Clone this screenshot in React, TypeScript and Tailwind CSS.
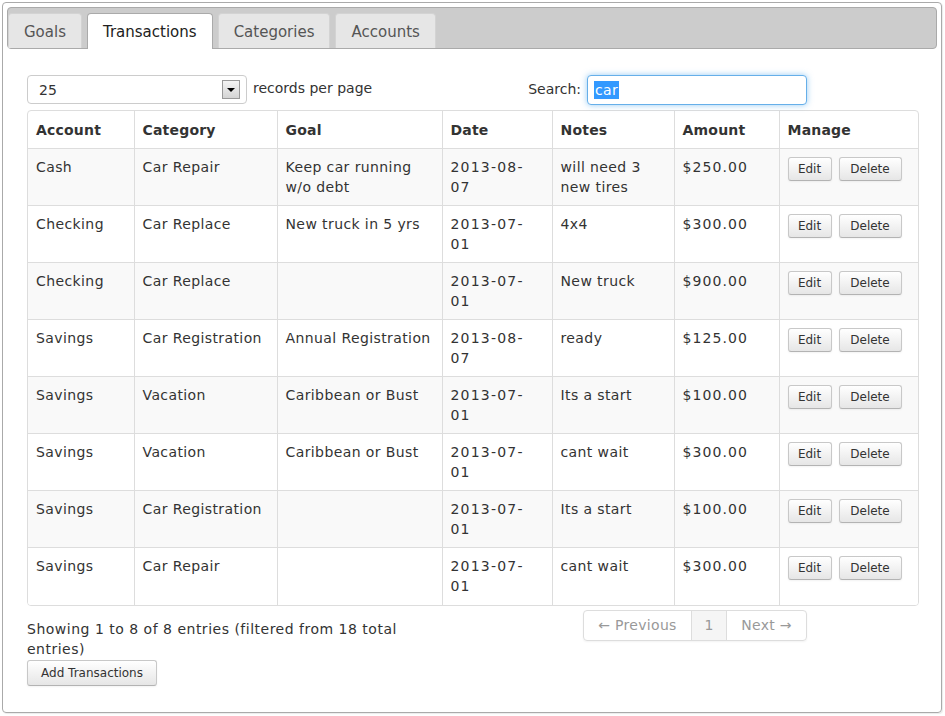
import React from "react";

const rows = [
  ["Cash", "Car Repair", "Keep car running w/o debt", "2013-08-07", "will need 3 new tires", "$250.00"],
  ["Checking", "Car Replace", "New truck in 5 yrs", "2013-07-01", "4x4", "$300.00"],
  ["Checking", "Car Replace", "", "2013-07-01", "New truck", "$900.00"],
  ["Savings", "Car Registration", "Annual Registration", "2013-08-07", "ready", "$125.00"],
  ["Savings", "Vacation", "Caribbean or Bust", "2013-07-01", "Its a start", "$100.00"],
  ["Savings", "Vacation", "Caribbean or Bust", "2013-07-01", "cant wait", "$300.00"],
  ["Savings", "Car Registration", "", "2013-07-01", "Its a start", "$100.00"],
  ["Savings", "Car Repair", "", "2013-07-01", "cant wait", "$300.00"],
];

const widths = [107, 143, 165, 110, 122, 105, 140];
const headers = ["Account", "Category", "Goal", "Date", "Notes", "Amount", "Manage"];

function Btn({ children, className = "" }: { children: React.ReactNode; className?: string }) {
  return (
    <span
      className={
        "inline-flex items-center justify-center h-[24px] rounded-[3px] border border-[#c8c8c8] border-b-[#b3b3b3] bg-gradient-to-b from-white to-[#e6e6e6] text-[12px] text-[#333] shadow-[inset_0_1px_0_rgba(255,255,255,0.2),0_1px_2px_rgba(0,0,0,0.05)] " +
        className
      }
    >
      {children}
    </span>
  );
}

export default function App() {
  return (
    <div className="w-[945px] h-[716px] bg-white pt-[2px] pl-[2px] font-['DejaVu_Sans',Verdana,sans-serif] text-[14px] leading-[20px] text-[#333]">
      <div className="w-[940px] h-[711px] border border-[#aaa] rounded-[4px] p-[4px] shadow-[1px_1px_1px_rgba(0,0,0,0.08)]">
        {/* tab bar */}
        <div className="h-[42px] border border-[#aaa] bg-[#cccccc] rounded-[4px] flex items-end gap-[5px] pl-0">
          <div className="h-[35px] px-[15px] pt-[2px] flex items-center border border-b-0 border-[#d3d3d3] bg-[#e6e6e6] rounded-t-[4px] text-[#555] text-[15px]">
            Goals
          </div>
          <div className="h-[36px] -mb-px px-[15px] pt-px flex items-center border border-b-0 border-[#aaa] bg-white rounded-t-[4px] text-[#212121] text-[15px]">
            Transactions
          </div>
          <div className="h-[35px] px-[15px] pt-[2px] flex items-center border border-b-0 border-[#d3d3d3] bg-[#e6e6e6] rounded-t-[4px] text-[#555] text-[15px]">
            Categories
          </div>
          <div className="h-[35px] px-[15px] pt-[2px] flex items-center border border-b-0 border-[#d3d3d3] bg-[#e6e6e6] rounded-t-[4px] text-[#555] text-[15px]">
            Accounts
          </div>
        </div>

        {/* panel */}
        <div className="pl-[20px] pt-[26px]">
          {/* controls */}
          <div className="w-[780px] grid grid-cols-2 gap-[20px]">
            <div className="flex items-start gap-[6px]">
              <div className="w-[220px] h-[29px] border border-[#ccc] rounded-[4px] bg-white flex items-center pl-[11px] pr-[6px] justify-between">
                <span>25</span>
                <span className="w-[18px] h-[19px] border border-[#999] bg-gradient-to-b from-[#f4f4f4] to-[#d4d4d4] flex items-center justify-center">
                  <span className="w-0 h-0 border-l-[4px] border-r-[4px] border-t-[4px] border-l-transparent border-r-transparent border-t-black" />
                </span>
              </div>
              <span className="leading-[26px]">records per page</span>
            </div>
            <div className="flex justify-end items-start gap-[6px]">
              <span className="leading-[28px]">Search:</span>
              <div className="w-[220px] h-[30px] border border-[#66afe9] rounded-[4px] bg-white shadow-[0_0_6px_rgba(82,168,236,0.6)] flex items-center pl-[6px]">
                <span className="bg-[#3399ff] text-white leading-[18px] px-px tracking-[0.4px]">car</span>
              </div>
            </div>
          </div>

          {/* table */}
          <div className="mt-[5px] w-[892px] border border-[#ddd] rounded-[4px] overflow-hidden">
            <table className="w-full table-fixed border-collapse">
              <colgroup>
                {widths.map((w, i) => (
                  <col key={i} style={{ width: i === 0 ? w - 1 : w }} />
                ))}
              </colgroup>
              <thead>
                <tr>
                  {headers.map((h, i) => (
                    <th
                      key={h}
                      className={
                        "text-left font-bold px-[8px] pt-[9px] pb-[8px] align-top tracking-[0.2px] " +
                        (i > 0 ? "border-l border-[#ddd]" : "")
                      }
                    >
                      {h}
                    </th>
                  ))}
                </tr>
              </thead>
              <tbody>
                {rows.map((r, ri) => (
                  <tr key={ri} className={ri % 2 === 0 ? "bg-[#f9f9f9]" : "bg-white"}>
                    {r.map((c, ci) => (
                      <td
                        key={ci}
                        className={
                          "px-[8px] py-[8px] h-[57px] align-top border-t border-[#ddd] " +
                          (ci > 0 ? "border-l " : "") +
                          (ci === 3 ? "tracking-[1.2px]" : ci === 5 ? "tracking-[1.1px]" : "tracking-[0.4px]")
                        }
                      >
                        {ci === 3 ? (
                          <>
                            {c.slice(0, 8)}
                            <br />
                            {c.slice(8)}
                          </>
                        ) : (
                          c
                        )}
                      </td>
                    ))}
                    <td className="px-[8px] py-[8px] align-top border-t border-l border-[#ddd]">
                      <div className="flex gap-[7px]">
                        <Btn className="w-[44px]">Edit</Btn>
                        <Btn className="w-[63px]">Delete</Btn>
                      </div>
                    </td>
                  </tr>
                ))}
              </tbody>
            </table>
          </div>

          {/* footer */}
          <div className="w-[780px] grid grid-cols-2 gap-[20px]">
            <div className="pt-[13px]">
              <div className="w-[380px] tracking-[0.5px]">Showing 1 to 8 of 8 entries (filtered from 18 total entries)</div>
              <Btn className="mt-px w-[130px] h-[26px]">Add Transactions</Btn>
            </div>
            <div className="flex justify-end pt-[4px]">
              <div className="flex h-[31px] border border-[#ddd] rounded-[4px] text-[#999] shadow-[0_1px_2px_rgba(0,0,0,0.05)] tracking-[0.3px]">
                <span className="w-[107px] flex items-center justify-center">← Previous</span>
                <span className="w-[35px] flex items-center justify-center bg-[#f5f5f5] border-l border-[#ddd]">1</span>
                <span className="w-[80px] flex items-center justify-center border-l border-[#ddd]">Next →</span>
              </div>
            </div>
          </div>
        </div>
      </div>
    </div>
  );
}
